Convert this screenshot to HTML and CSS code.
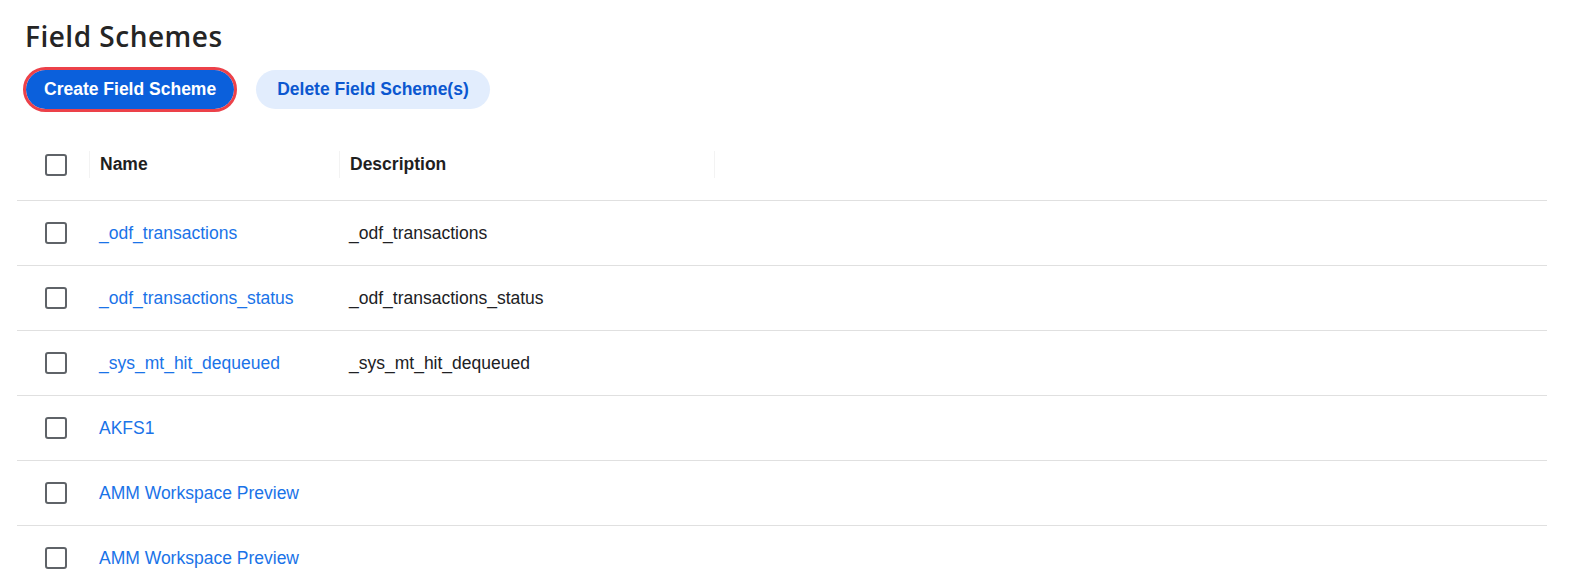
FILE: index.html
```html
<!DOCTYPE html>
<html lang="en">
<head>
<meta charset="utf-8">
<title>Field Schemes</title>
<link rel="stylesheet" href="styles.css">
</head>
<body>
<main class="page">
  <h1 class="title">Field Schemes</h1>
  <div class="actions">
    <button class="btn btn-primary" type="button">Create Field Scheme</button>
    <button class="btn btn-tonal" type="button">Delete Field Scheme(s)</button>
  </div>

  <div class="table" role="table">
    <div class="row head" role="row">
      <div class="cell check"><span class="box"></span></div>
      <div class="cell col-name">Name</div>
      <div class="cell col-desc">Description</div>
      <div class="cell col-rest"></div>
    </div>
    <div class="row" role="row">
      <div class="cell check"><span class="box"></span></div>
      <div class="cell col-name"><a class="link" href="#">_odf_transactions</a></div>
      <div class="cell col-desc">_odf_transactions</div>
      <div class="cell col-rest"></div>
    </div>
    <div class="row" role="row">
      <div class="cell check"><span class="box"></span></div>
      <div class="cell col-name"><a class="link" href="#">_odf_transactions_status</a></div>
      <div class="cell col-desc">_odf_transactions_status</div>
      <div class="cell col-rest"></div>
    </div>
    <div class="row" role="row">
      <div class="cell check"><span class="box"></span></div>
      <div class="cell col-name"><a class="link" href="#">_sys_mt_hit_dequeued</a></div>
      <div class="cell col-desc">_sys_mt_hit_dequeued</div>
      <div class="cell col-rest"></div>
    </div>
    <div class="row" role="row">
      <div class="cell check"><span class="box"></span></div>
      <div class="cell col-name"><a class="link" href="#">AKFS1</a></div>
      <div class="cell col-desc"></div>
      <div class="cell col-rest"></div>
    </div>
    <div class="row" role="row">
      <div class="cell check"><span class="box"></span></div>
      <div class="cell col-name"><a class="link" href="#">AMM Workspace Preview</a></div>
      <div class="cell col-desc"></div>
      <div class="cell col-rest"></div>
    </div>
    <div class="row" role="row">
      <div class="cell check"><span class="box"></span></div>
      <div class="cell col-name"><a class="link" href="#">AMM Workspace Preview</a></div>
      <div class="cell col-desc"></div>
      <div class="cell col-rest"></div>
    </div>
  </div>
</main>
</body>
</html>
```

FILE: styles.css
```css
html, body {
  margin: 0;
  background: #ffffff;
}

body {
  font-family: "Liberation Sans", Arial, sans-serif;
  color: #202124;
  overflow: hidden;
}

.page {
  padding: 18px 27px 0 17px;
}

.title {
  margin: 0 0 0 8px;
  font-family: "Open Sans", Lato, sans-serif;
  font-weight: 600;
  font-size: 28px;
  line-height: 36px;
  letter-spacing: 0.5px;
  color: #252525;
}

.actions {
  display: flex;
  align-items: center;
  gap: 22px;
  margin: 16px 0 0 9px;
}

.btn {
  height: 39px;
  padding: 0 18px;
  border: 0;
  border-radius: 20px;
  font-family: "Liberation Sans", Arial, sans-serif;
  font-size: 17.5px;
  font-weight: 700;
  cursor: pointer;
}

.btn-primary {
  background: #0b60dc;
  color: #ffffff;
  outline: 3px solid #ec4149;
  outline-offset: 0;
}

.btn-tonal {
  padding: 0 21px;
  background: #e2edfd;
  color: #0b57d0;
}

.table {
  margin-top: 20px;
}

.row {
  display: grid;
  grid-template-columns: 72px 250px 375px 1fr;
  align-items: center;
  height: 64px;
  border-bottom: 1px solid #e0e0e0;
  font-size: 17.5px;
}

.row.head {
  height: 71px;
  font-weight: 700;
  color: #1f1f1f;
}

.cell {
  padding-left: 10px;
  white-space: nowrap;
}

.head .cell {
  display: flex;
  align-items: center;
  height: 27px;
}

.head .col-name,
.head .col-desc,
.head .col-rest {
  border-left: 1px solid #f3f3f3;
}

.cell.check {
  padding-left: 28px;
  display: flex;
  align-items: center;
}

.box {
  display: block;
  width: 18px;
  height: 18px;
  border: 2px solid #5f6368;
  border-radius: 3px;
}

.link {
  color: #1a73e8;
  text-decoration: none;
}
```
